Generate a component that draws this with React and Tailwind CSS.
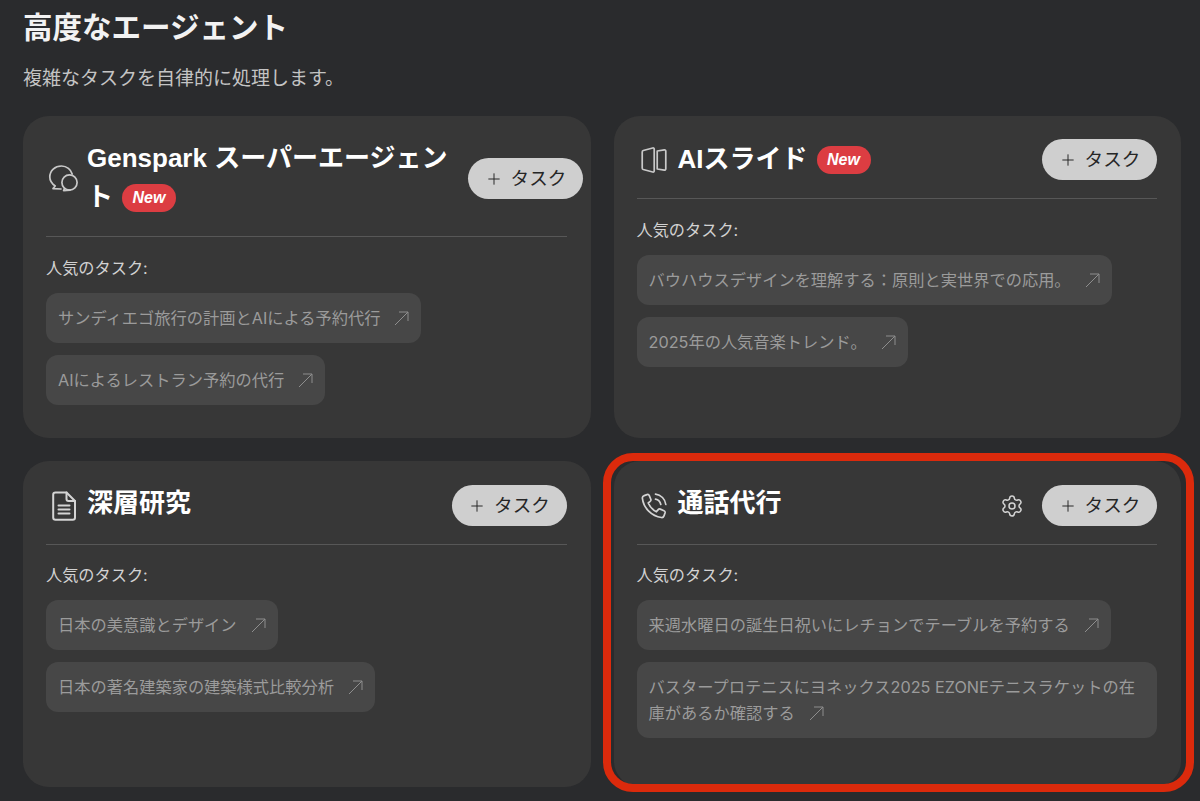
import { Plus, Settings } from 'lucide-react';

const CARDS = [
  {
    id: 'super',
    title: 'Genspark スーパーエージェント',
    isNew: true,
    icon: 'chat',
    tasks: ['サンディエゴ旅行の計画とAIによる予約代行', 'AIによるレストラン予約の代行'],
  },
  {
    id: 'slides',
    title: 'AIスライド',
    isNew: true,
    icon: 'slides',
    tasks: ['バウハウスデザインを理解する：原則と実世界での応用。', '2025年の人気音楽トレンド。'],
  },
  {
    id: 'research',
    title: '深層研究',
    icon: 'doc',
    lower: true,
    tasks: ['日本の美意識とデザイン', '日本の著名建築家の建築様式比較分析'],
  },
  {
    id: 'call',
    title: '通話代行',
    icon: 'phone',
    lower: true,
    settings: true,
    highlight: true,
    tasks: [
      '来週水曜日の誕生日祝いにレチョンでテーブルを予約する',
      'バスタープロテニスにヨネックス2025 EZONEテニスラケットの在庫があるか確認する',
    ],
  },
];

function CardIcon({ name }) {
  if (name === 'chat') {
    return (
      <svg width="32" height="32" viewBox="0 0 32 32" fill="none" stroke="#c9c9c9" strokeWidth="1.7" strokeLinecap="round" strokeLinejoin="round">
        <path d="M15 27 L7 26.6 L9.2 24 C6 21.8 3.8 18.6 3.8 15 C3.8 8.6 9 4 15.5 4 C20.8 4 25 7.6 26.2 12" />
        <circle cx="23.5" cy="20.5" r="7.6" />
        <path d="M18.6 26.4 L17.6 28.6 L24 28.1" />
      </svg>
    );
  }
  if (name === 'slides') {
    return (
      <svg width="30" height="30" viewBox="0 0 28 28" fill="none" stroke="#c9c9c9" strokeWidth="1.6" strokeLinejoin="round">
        <path d="M3 6.5 C3 5.8 3.4 5.3 4 5.1 L12.8 2.8 C13.6 2.6 14.2 3.1 14.2 3.9 V24.1 C14.2 24.9 13.6 25.4 12.8 25.2 L4 22.9 C3.4 22.7 3 22.2 3 21.5 Z" />
        <path d="M17 5.6 L23.6 4.6 C24.4 4.5 25 5 25 5.8 V22.2 C25 23 24.4 23.5 23.6 23.4 L17 22.4 Z" />
      </svg>
    );
  }
  if (name === 'doc') {
    return (
      <svg width="28" height="32" viewBox="0 0 28 32" fill="none" stroke="#d4d4d4" strokeWidth="2" strokeLinecap="round" strokeLinejoin="round">
        <path d="M5.5 2.5 H16.5 L25 11 V27.5 C25 28.8 24 29.7 22.8 29.7 H5.5 C4.2 29.7 3.2 28.8 3.2 27.5 V4.7 C3.2 3.4 4.2 2.5 5.5 2.5 Z" />
        <path d="M16.5 2.5 V9 C16.5 10.2 17.3 11 18.5 11 H25" />
        <path d="M8.5 15.5 H19.5 M8.5 19.5 H19.5 M8.5 23.5 H19.5" />
      </svg>
    );
  }
  return (
    <svg width="30" height="30" viewBox="0 0 30 30" fill="none" stroke="#d4d4d4" strokeWidth="1.7" strokeLinecap="round" strokeLinejoin="round">
      <path d="M5.2 4.6 L8 3.6 C9 3.3 9.9 3.7 10.3 4.6 L11.8 8.3 C12.1 9.1 11.9 9.9 11.2 10.4 L9.2 12 C10.8 15.6 13.7 18.8 17.4 20.8 L19.2 18.6 C19.7 18 20.5 17.8 21.3 18.1 L25 19.7 C25.9 20.1 26.3 21 26 22 L25 24.9 C24.6 26 23.6 26.7 22.4 26.5 C12.6 25.2 4.6 17.2 3.4 7.4 C3.2 6.2 4 5 5.2 4.6 Z" />
      <path d="M16.5 3.2 C22 3.8 26.2 8 26.8 13.5" />
      <path d="M16.5 8.2 C19.2 8.8 21.2 10.8 21.8 13.5" />
    </svg>
  );
}

function ArrowIcon() {
  return (
    <svg width="15" height="15" viewBox="0 0 15 15" fill="none" stroke="#8e8e8e" strokeWidth="1" className="ml-[14px] inline-block align-[-2px]">
      <path d="M1 14 L14 1 M5 1 H14 V10" />
    </svg>
  );
}

function NewBadge() {
  return (
    <span className="ml-[9px] inline-flex h-[28px] w-[54px] items-center justify-center rounded-[14px] bg-[#dc3d42] align-[3px] font-['Liberation_Sans'] text-[16px] font-bold italic leading-none text-white">
      New
    </span>
  );
}

function AgentCard({ card }) {
  return (
    <div className={`relative h-full rounded-[26px] bg-[#373737] pl-[23px] pr-[24px] ${card.lower ? 'pt-[24px]' : 'pt-[23px]'}`}>
      {card.highlight && (
        <div className="pointer-events-none absolute -top-[8px] -right-[13px] -bottom-[5px] -left-[11px] rounded-[30px] border-[8px] border-[#db2a0c]" />
      )}
      <div className={`flex items-center justify-between border-b border-[#575757] ${card.id === 'super' ? 'pb-[19px]' : 'pb-[18px]'}`}>
        <div className={`flex items-center gap-[9px] ${card.id === 'super' ? 'w-[422px] shrink-0' : ''}`}>
          <div className="flex w-[32px] shrink-0 justify-end">
            <CardIcon name={card.icon} />
          </div>
          <h3 className={`font-['Liberation_Sans','Noto_Sans_CJK_JP',sans-serif] text-[26px] font-bold leading-[39px] text-white ${card.lower ? '-mt-[4px]' : ''}`}>
            {card.title}
            {card.isNew && <NewBadge />}
          </h3>
        </div>
        <div className="flex shrink-0 items-center gap-[18px]">
          {card.settings && <Settings size={24} strokeWidth={1.5} className="text-[#d4d4d4]" />}
          <button className="flex h-[41px] w-[115px] items-center justify-center gap-[8px] rounded-full bg-[#cfcfcf] pt-[1px] text-[18.6px] text-[#262626]">
            <Plus size={18} strokeWidth={1.3} />
            <span>タスク</span>
          </button>
        </div>
      </div>
      <p className={`${card.lower ? 'mt-[19px]' : 'mt-[20px]'} text-[16.2px] leading-[22px] text-[#d2d2d2]`}>人気のタスク:</p>
      <div className="mt-[14px] flex flex-col items-start gap-[11.5px]">
        {card.tasks.map((task) => (
          <a key={task} className="w-fit rounded-[12px] bg-[#474747] p-[12px] text-[16.24px] leading-[26px] text-[#9b9b9b]">
            {task}
            <ArrowIcon />
          </a>
        ))}
      </div>
    </div>
  );
}

export default function App() {
  return (
    <div className="h-[801px] overflow-hidden bg-[#2a2b2d] pl-[23px] pr-[19px] font-['Inter','Noto_Sans_CJK_JP',sans-serif]">
      <h1 className="pt-[8px] text-[29.5px] font-semibold leading-[38px] text-[#f2f2f2]">高度なエージェント</h1>
      <p className="mt-[20px] text-[19px] leading-[26px] text-[#c4c4c4]">複雑なタスクを自律的に処理します。</p>
      <div className="mt-[24px] grid grid-cols-2 grid-rows-[322px_326px] gap-x-[23px] gap-y-[23px]">
        {CARDS.map((card) => (
          <AgentCard key={card.id} card={card} />
        ))}
      </div>
    </div>
  );
}
